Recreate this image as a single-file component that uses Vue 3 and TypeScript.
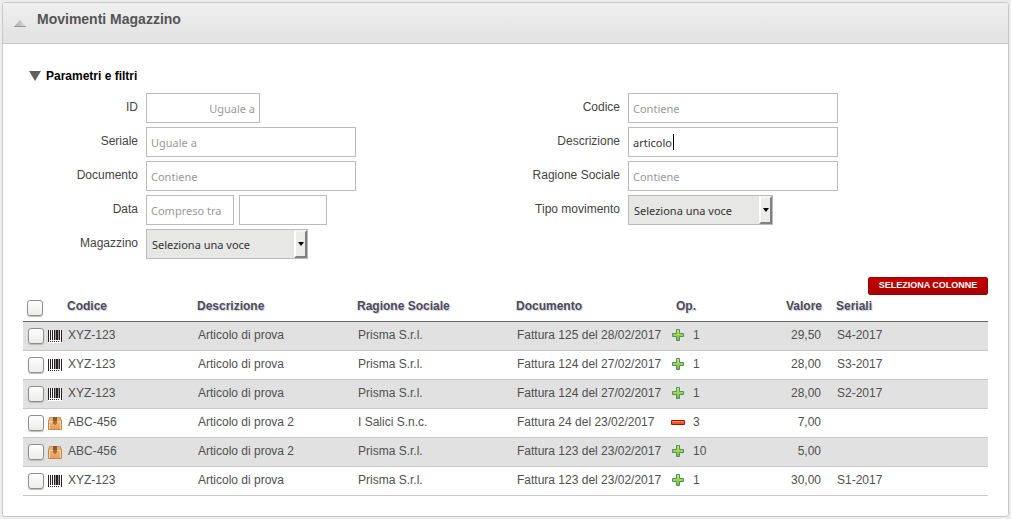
<script setup lang="ts">
import { ref } from 'vue'

interface Movement {
  kind: 'barcode' | 'box'
  code: string
  description: string
  company: string
  document: string
  op: 'in' | 'out'
  quantity: number
  value: string
  serials: string
}

const description = ref('articolo')
const showFilters = ref(true)

const rows: Movement[] = [
  { kind: 'barcode', code: 'XYZ-123', description: 'Articolo di prova', company: 'Prisma S.r.l.', document: 'Fattura 125 del 28/02/2017', op: 'in', quantity: 1, value: '29,50', serials: 'S4-2017' },
  { kind: 'barcode', code: 'XYZ-123', description: 'Articolo di prova', company: 'Prisma S.r.l.', document: 'Fattura 124 del 27/02/2017', op: 'in', quantity: 1, value: '28,00', serials: 'S3-2017' },
  { kind: 'barcode', code: 'XYZ-123', description: 'Articolo di prova', company: 'Prisma S.r.l.', document: 'Fattura 124 del 27/02/2017', op: 'in', quantity: 1, value: '28,00', serials: 'S2-2017' },
  { kind: 'box', code: 'ABC-456', description: 'Articolo di prova 2', company: 'I Salici S.n.c.', document: 'Fattura 24 del 23/02/2017', op: 'out', quantity: 3, value: '7,00', serials: '' },
  { kind: 'box', code: 'ABC-456', description: 'Articolo di prova 2', company: 'Prisma S.r.l.', document: 'Fattura 123 del 23/02/2017', op: 'in', quantity: 10, value: '5,00', serials: '' },
  { kind: 'barcode', code: 'XYZ-123', description: 'Articolo di prova', company: 'Prisma S.r.l.', document: 'Fattura 123 del 23/02/2017', op: 'in', quantity: 1, value: '30,00', serials: 'S1-2017' },
]
</script>

<template>
  <main class="panel">
    <header class="panel-head">
      <svg class="collapse" viewBox="0 0 12 7" aria-hidden="true">
        <defs>
          <linearGradient id="collapse-fill" x1="0" y1="0" x2="1" y2="0">
            <stop offset="0" stop-color="#a8a8a8" />
            <stop offset="1" stop-color="#dedede" />
          </linearGradient>
        </defs>
        <path d="M6 0L12 7H0Z" fill="url(#collapse-fill)" />
        <path d="M0 6.5H12" stroke="#9a9a9a" />
      </svg>
      <h1>Movimenti Magazzino</h1>
    </header>

    <div class="panel-body">
      <button class="filters-toggle" type="button" :aria-expanded="showFilters" @click="showFilters = !showFilters">
        <svg viewBox="0 0 12 10" aria-hidden="true"><path d="M0 0H12L6 10Z" fill="#606060" /></svg>
        Parametri e filtri
      </button>

      <form v-show="showFilters" class="filters" @submit.prevent>
        <div class="column">
          <div class="field">
            <label for="f-id">ID</label>
            <input id="f-id" class="medium numeric" type="text" placeholder="Uguale a" />
          </div>
          <div class="field">
            <label for="f-serial">Seriale</label>
            <input id="f-serial" class="wide" type="text" placeholder="Uguale a" />
          </div>
          <div class="field">
            <label for="f-document">Documento</label>
            <input id="f-document" class="wide" type="text" placeholder="Contiene" />
          </div>
          <div class="field">
            <label for="f-date">Data</label>
            <div class="range">
              <input id="f-date" class="short" type="text" placeholder="Compreso tra" />
              <input class="short" type="text" aria-label="Data fine" />
            </div>
          </div>
          <div class="field">
            <label for="f-store">Magazzino</label>
            <div class="select store">
              <select id="f-store"><option>Seleziona una voce</option></select>
              <span class="drop"></span>
            </div>
          </div>
        </div>
        <div class="column">
          <div class="field">
            <label for="f-code">Codice</label>
            <input id="f-code" class="wide" type="text" placeholder="Contiene" />
          </div>
          <div class="field">
            <label for="f-description">Descrizione</label>
            <div class="active">
              <input id="f-description" v-model="description" class="wide" type="text" />
              <span class="caret"></span>
            </div>
          </div>
          <div class="field">
            <label for="f-company">Ragione Sociale</label>
            <input id="f-company" class="wide" type="text" placeholder="Contiene" />
          </div>
          <div class="field">
            <label for="f-type">Tipo movimento</label>
            <div class="select type">
              <select id="f-type"><option>Seleziona una voce</option></select>
              <span class="drop"></span>
            </div>
          </div>
        </div>
      </form>

      <div class="actions">
        <button class="columns-button" type="button">SELEZIONA COLONNE</button>
      </div>

      <table>
        <colgroup>
          <col class="c-select" />
          <col class="c-code" />
          <col class="c-description" />
          <col class="c-company" />
          <col class="c-document" />
          <col class="c-op" />
          <col class="c-value" />
          <col />
        </colgroup>
        <thead>
          <tr>
            <th class="pick"><input type="checkbox" aria-label="Seleziona tutto" /></th>
            <th>Codice</th>
            <th>Descrizione</th>
            <th>Ragione Sociale</th>
            <th>Documento</th>
            <th class="op-head">Op.</th>
            <th class="value">Valore</th>
            <th>Seriali</th>
          </tr>
        </thead>
        <tbody>
          <tr v-for="(row, i) in rows" :key="i">
            <td>
              <div class="picker">
                <input type="checkbox" :aria-label="'Seleziona ' + row.code" />
                <svg v-if="row.kind === 'barcode'" class="item" viewBox="0 0 14 13" shape-rendering="crispEdges" aria-hidden="true">
                  <rect width="14" height="13" fill="#fff" />
                  <path d="M0 0h1v12h-1zM2 0h1v10h-1zM4 0h1v10h-1zM6 0h1v10h-1zM8 0h2v10h-2zM11 0h1v10h-1zM13 0h1v12h-1z" fill="#262223" />
                  <path d="M7 0h1v10h-1zM10 0h1v10h-1z" fill="#999" />
                  <path d="M2 11h1v1h-1zM4 11h1v1h-1zM6 11h1v1h-1zM8 11h1v1h-1zM10 11h1v1h-1z" fill="#333" />
                </svg>
                <svg v-else class="item" viewBox="0 0 14 13" aria-hidden="true">
                  <defs>
                    <linearGradient id="carton" x1="0" y1="0" x2="0" y2="1">
                      <stop offset="0" stop-color="#f0b57a" />
                      <stop offset="1" stop-color="#e3a063" />
                    </linearGradient>
                  </defs>
                  <path d="M1.5 0H12.5L14 4V12Q14 13 13 13H1Q0 13 0 12V4Z" fill="#c98344" />
                  <path d="M2 .5H12L13 4H1Z" fill="#dfb182" />
                  <path d="M1 4H13V12H1Z" fill="url(#carton)" />
                  <path d="M1 4.5H13M1.5 4V12M12.5 4V12" stroke="#fbd3a2" fill="none" />
                  <path d="M5 0H9V4H5Z" fill="#925823" />
                  <path d="M5 4H9V7L8 6.3V8H7V7L6 8V7H5Z" fill="#a8702f" />
                </svg>
              </div>
            </td>
            <td>{{ row.code }}</td>
            <td>{{ row.description }}</td>
            <td>{{ row.company }}</td>
            <td>{{ row.document }}</td>
            <td>
              <div class="op">
                <svg v-if="row.op === 'in'" viewBox="0 0 14 12" aria-label="Carico">
                  <defs>
                    <linearGradient id="plus-fill" x1="0" y1="0" x2="0" y2="1">
                      <stop offset="0" stop-color="#e0e65b" />
                      <stop offset="1" stop-color="#79b63a" />
                    </linearGradient>
                  </defs>
                  <path d="M5.5 .5H8.5V4.5H12.5V7.5H8.5V11.5H5.5V7.5H1.5V4.5H5.5Z" fill="url(#plus-fill)" stroke="#43966a" />
                </svg>
                <svg v-else viewBox="0 0 14 12" aria-label="Scarico">
                  <path d="M.5 4.5H13.5V8.5H.5Z" fill="#ef5a24" stroke="#a80f08" />
                  <path d="M1 5.5H13" stroke="#ff8a55" />
                </svg>
                <span>{{ row.quantity }}</span>
              </div>
            </td>
            <td class="value">{{ row.value }}</td>
            <td>{{ row.serials }}</td>
          </tr>
        </tbody>
      </table>
    </div>
  </main>
</template>

<style>
body {
  margin: 0;
  background: #ececec;
}
</style>

<style scoped>
* {
  box-sizing: border-box;
}

.panel {
  margin: 2px;
  border: 1px solid #c8c8c8;
  border-radius: 3px;
  background: #fff;
  color: #444;
  font: 12px/16px "Liberation Sans", Arial, sans-serif;
}

.panel-head {
  display: flex;
  align-items: center;
  gap: 11px;
  height: 41px;
  padding: 0 11px;
  border-bottom: 1px solid #c8c8c8;
  border-radius: 2px 2px 0 0;
  background: linear-gradient(#efefef, #e2e2e2);
}

.collapse {
  width: 12px;
  height: 7px;
}

h1 {
  margin: 0;
  padding-bottom: 8px;
  color: #555;
  font-size: 14px;
  line-height: 16px;
}

.panel-body {
  padding: 22px 20px 20px;
}

.filters-toggle {
  display: flex;
  align-items: center;
  gap: 5px;
  height: 20px;
  padding: 0 6px;
  border: 0;
  background: none;
  color: #000;
  font: bold 12px/20px "Liberation Sans", Arial, sans-serif;
}

.filters-toggle svg {
  width: 12px;
  height: 10px;
}

.filters {
  display: grid;
  grid-template-columns: 1fr 1fr;
  margin-top: 7px;
  padding-right: 1px;
}

.column {
  display: flex;
  flex-direction: column;
  gap: 4px;
}

.field {
  display: flex;
  gap: 8px;
  height: 30px;
}

.field label {
  width: 115px;
  line-height: 28px;
  text-align: right;
}

.field input,
.field select {
  height: 30px;
  margin: 0;
  border: 1px solid #bbb;
  border-radius: 0;
  color: #333;
  font: 11px "Noto Sans", "Open Sans", sans-serif;
  outline: 0;
}

.field input {
  padding: 0 4px;
  background: #fff;
}

.field input::placeholder {
  color: #999;
}

.field .short {
  width: 88px;
}

.field .medium {
  width: 114px;
}

.field .wide {
  width: 210px;
}

.numeric {
  text-align: right;
}

.range {
  display: flex;
  gap: 5px;
}

.active,
.select {
  position: relative;
}

.caret {
  position: absolute;
  top: 7px;
  left: 45px;
  width: 1px;
  height: 16px;
  background: #000;
}

.field select {
  width: 100%;
  padding: 1px 5px 0;
  appearance: none;
  background: #e7e7e6;
}

.store {
  width: 162px;
}

.type {
  width: 145px;
}

.drop {
  position: absolute;
  top: 1px;
  right: 1px;
  bottom: 1px;
  display: flex;
  align-items: center;
  justify-content: center;
  width: 13px;
  border: 2px solid;
  border-color: #f4f4f4 #808080 #808080 #fff;
  background: #ececeb;
  pointer-events: none;
}

.drop::after {
  content: "";
  border: 3px solid transparent;
  border-top: 4px solid #000;
  border-bottom: 0;
}

.actions {
  display: flex;
  justify-content: flex-end;
  margin-top: 18px;
}

.columns-button {
  min-width: 120px;
  height: 18px;
  padding: 0 7px 2px;
  border: 1px solid #900;
  border-radius: 2px;
  background: linear-gradient(#c60000, #a90000);
  color: #fff;
  font: bold 9px/14px "Liberation Sans", Arial, sans-serif;
}

table {
  width: 100%;
  border-spacing: 0;
  table-layout: fixed;
}

.c-select {
  width: 44px;
}

.c-code {
  width: 130px;
}

.c-description {
  width: 160px;
}

.c-company {
  width: 159px;
}

.c-document {
  width: 154px;
}

.c-op {
  width: 90px;
}

.c-value {
  width: 76px;
}

th {
  height: 27px;
  padding: 0 0 4px;
  border-bottom: 1px solid #666;
  color: #4c4c55;
  text-align: left;
  text-shadow: 1px 1px 1px #c8c8e8;
  white-space: nowrap;
}

td {
  height: 29px;
  padding: 0 0 2px 1px;
  border-bottom: 1px solid #c8c8c8;
  color: #505050;
  white-space: nowrap;
}

tbody tr:nth-child(odd) {
  background: #e1e1e1;
}

th.pick {
  padding: 0 0 0 4px;
}

th.op-head {
  padding-left: 6px;
}

th.value {
  padding-right: 14px;
  text-align: right;
}

td.value {
  padding-right: 15px;
  text-align: right;
}

table input {
  display: block;
  width: 16px;
  height: 16px;
  margin: 0;
  appearance: none;
  border: 1px solid #8f8f8c;
  border-radius: 3px;
  background: linear-gradient(#fdfdfd, #ececeb);
  box-shadow: 0 1px 1px #bbb;
}

.picker {
  display: flex;
  align-items: center;
  gap: 4px;
  padding: 2px 0 0 4px;
}

.item {
  width: 14px;
  height: 13px;
}

.op {
  display: flex;
  align-items: center;
  gap: 8px;
}

.op svg {
  width: 14px;
  height: 12px;
}
</style>
